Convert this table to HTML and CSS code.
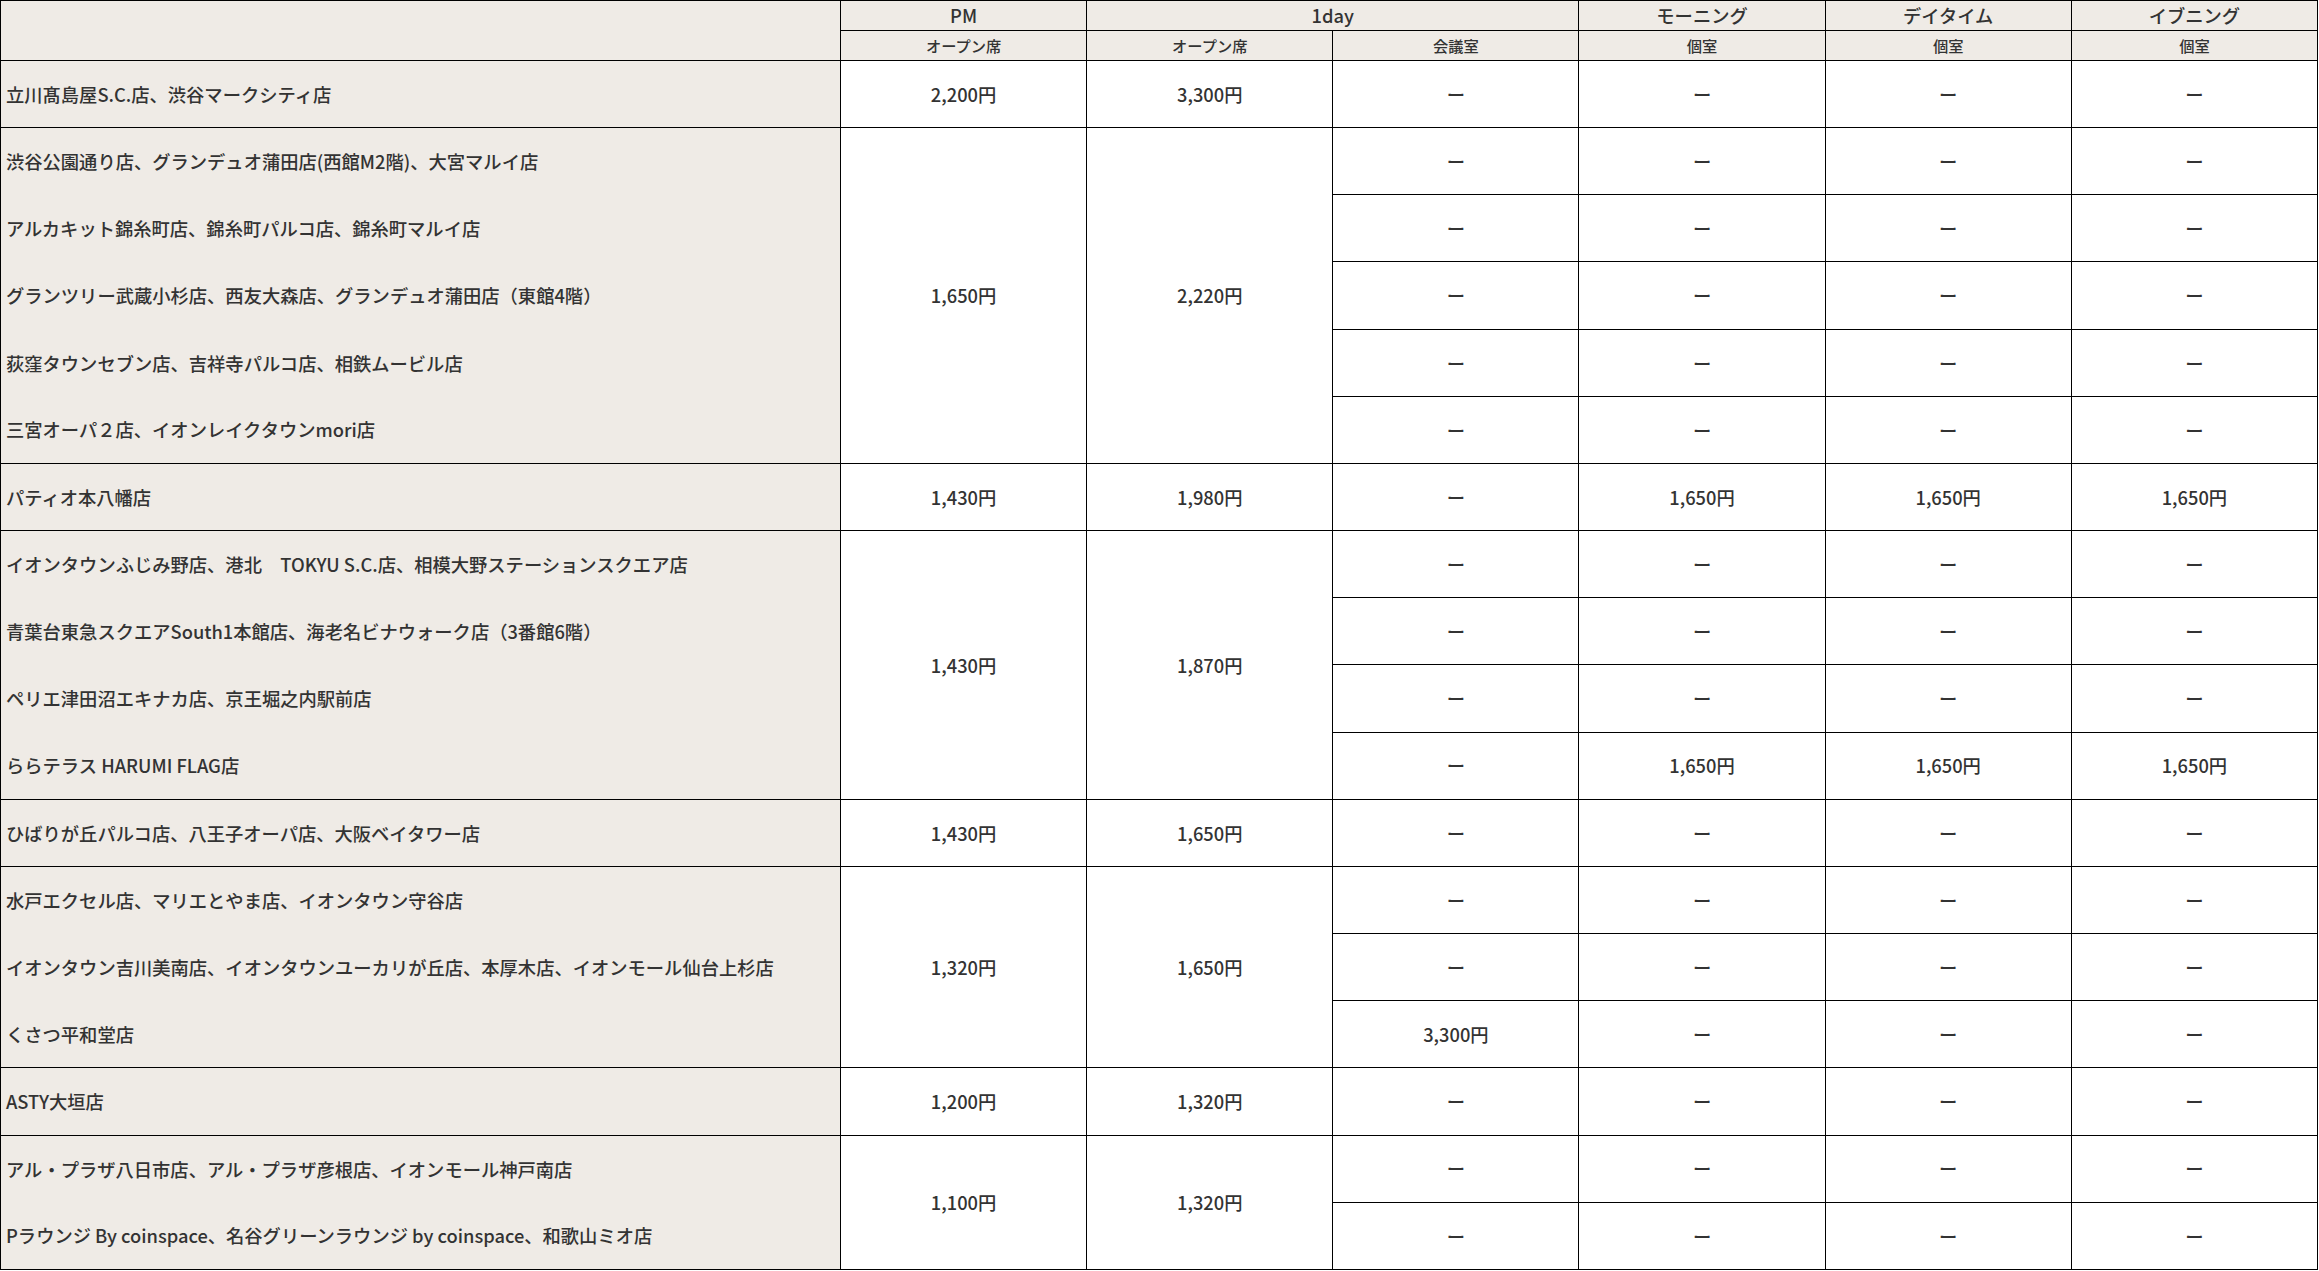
FILE: index.html
```html
<!DOCTYPE html>
<html lang="ja">
<head>
<meta charset="utf-8">
<title>料金表</title>
<link rel="stylesheet" href="styles.css">
</head>
<body>
<table class="price-table">
  <colgroup>
    <col class="col-name">
    <col class="col-data"><col class="col-data"><col class="col-data">
    <col class="col-data"><col class="col-data"><col class="col-data">
  </colgroup>
  <thead>
    <tr class="head-main">
      <th class="blank" rowspan="2"></th>
      <th>PM</th>
      <th colspan="2">1day</th>
      <th>モーニング</th>
      <th>デイタイム</th>
      <th>イブニング</th>
    </tr>
    <tr class="head-sub">
      <th>オープン席</th>
      <th>オープン席</th>
      <th>会議室</th>
      <th>個室</th>
      <th>個室</th>
      <th>個室</th>
    </tr>
  </thead>
  <tbody>
    <tr>
      <td class="name">立川髙島屋S.C.店、渋谷マークシティ店</td>
      <td>2,200円</td><td>3,300円</td>
      <td>ー</td><td>ー</td><td>ー</td><td>ー</td>
    </tr>

    <tr>
      <td class="name">渋谷公園通り店、グランデュオ蒲田店(西館M2階)、大宮マルイ店</td>
      <td rowspan="5">1,650円</td><td rowspan="5">2,220円</td>
      <td>ー</td><td>ー</td><td>ー</td><td>ー</td>
    </tr>
    <tr>
      <td class="name cont">アルカキット錦糸町店、錦糸町パルコ店、錦糸町マルイ店</td>
      <td>ー</td><td>ー</td><td>ー</td><td>ー</td>
    </tr>
    <tr>
      <td class="name cont">グランツリー武蔵小杉店、西友大森店、グランデュオ蒲田店（東館4階）</td>
      <td>ー</td><td>ー</td><td>ー</td><td>ー</td>
    </tr>
    <tr>
      <td class="name cont">荻窪タウンセブン店、吉祥寺パルコ店、相鉄ムービル店</td>
      <td>ー</td><td>ー</td><td>ー</td><td>ー</td>
    </tr>
    <tr>
      <td class="name cont">三宮オーパ２店、イオンレイクタウンmori店</td>
      <td>ー</td><td>ー</td><td>ー</td><td>ー</td>
    </tr>

    <tr>
      <td class="name">パティオ本八幡店</td>
      <td>1,430円</td><td>1,980円</td>
      <td>ー</td><td>1,650円</td><td>1,650円</td><td>1,650円</td>
    </tr>

    <tr>
      <td class="name">イオンタウンふじみ野店、港北　TOKYU S.C.店、相模大野ステーションスクエア店</td>
      <td rowspan="4">1,430円</td><td rowspan="4">1,870円</td>
      <td>ー</td><td>ー</td><td>ー</td><td>ー</td>
    </tr>
    <tr>
      <td class="name cont">青葉台東急スクエアSouth1本館店、海老名ビナウォーク店（3番館6階）</td>
      <td>ー</td><td>ー</td><td>ー</td><td>ー</td>
    </tr>
    <tr>
      <td class="name cont">ペリエ津田沼エキナカ店、京王堀之内駅前店</td>
      <td>ー</td><td>ー</td><td>ー</td><td>ー</td>
    </tr>
    <tr>
      <td class="name cont">ららテラス HARUMI FLAG店</td>
      <td>ー</td><td>1,650円</td><td>1,650円</td><td>1,650円</td>
    </tr>

    <tr>
      <td class="name">ひばりが丘パルコ店、八王子オーパ店、大阪ベイタワー店</td>
      <td>1,430円</td><td>1,650円</td>
      <td>ー</td><td>ー</td><td>ー</td><td>ー</td>
    </tr>

    <tr>
      <td class="name">水戸エクセル店、マリエとやま店、イオンタウン守谷店</td>
      <td rowspan="3">1,320円</td><td rowspan="3">1,650円</td>
      <td>ー</td><td>ー</td><td>ー</td><td>ー</td>
    </tr>
    <tr>
      <td class="name cont">イオンタウン吉川美南店、イオンタウンユーカリが丘店、本厚木店、イオンモール仙台上杉店</td>
      <td>ー</td><td>ー</td><td>ー</td><td>ー</td>
    </tr>
    <tr>
      <td class="name cont">くさつ平和堂店</td>
      <td>3,300円</td><td>ー</td><td>ー</td><td>ー</td>
    </tr>

    <tr>
      <td class="name">ASTY大垣店</td>
      <td>1,200円</td><td>1,320円</td>
      <td>ー</td><td>ー</td><td>ー</td><td>ー</td>
    </tr>

    <tr>
      <td class="name">アル・プラザ八日市店、アル・プラザ彦根店、イオンモール神戸南店</td>
      <td rowspan="2">1,100円</td><td rowspan="2">1,320円</td>
      <td>ー</td><td>ー</td><td>ー</td><td>ー</td>
    </tr>
    <tr>
      <td class="name cont">Pラウンジ By coinspace、名谷グリーンラウンジ by coinspace、和歌山ミオ店</td>
      <td>ー</td><td>ー</td><td>ー</td><td>ー</td>
    </tr>
  </tbody>
</table>
</body>
</html>
```

FILE: styles.css
```css
html, body {
  margin: 0;
  padding: 0;
  background: #ffffff;
}

body {
  font-family: "Noto Sans CJK JP Medium", "Noto Sans CJK JP", "Noto Sans", sans-serif;
  color: #333333;
}

.price-table {
  width: 2318px;
  border-collapse: collapse;
  table-layout: fixed;
}

.col-name {
  width: 840px;
}

.price-table th,
.price-table td {
  border: 1px solid #000000;
  padding: 0;
  text-align: center;
  vertical-align: middle;
  font-weight: 500;
}

.price-table th {
  background: #efebe6;
}

.head-main th {
  height: 29px;
  font-size: 18.3px;
  line-height: 1;
}

.head-sub th {
  height: 29px;
  font-size: 15.25px;
  line-height: 1;
}

.price-table td {
  height: 66.17px;
  font-size: 18.3px;
  line-height: 1;
  background: #ffffff;
}

.price-table td.name {
  background: #efebe6;
  text-align: left;
  padding-left: 5px;
}

.price-table td.cont {
  border-top-style: hidden;
}
```
